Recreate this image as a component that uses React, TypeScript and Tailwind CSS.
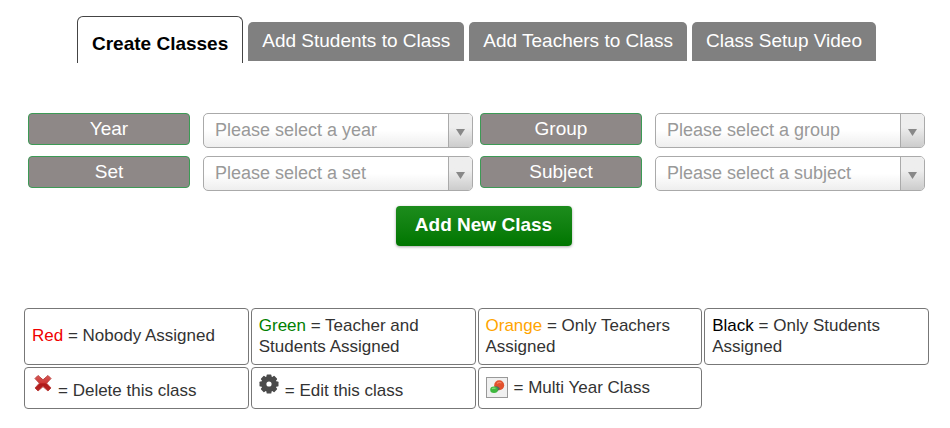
import type { ReactNode } from "react";

const tabs = ["Create Classes", "Add Students to Class", "Add Teachers to Class", "Class Setup Video"];

const fields = [
  { id: "year", label: "Year", placeholder: "Please select a year" },
  { id: "group", label: "Group", placeholder: "Please select a group" },
  { id: "set", label: "Set", placeholder: "Please select a set" },
  { id: "subject", label: "Subject", placeholder: "Please select a subject" },
];

function Tab({ label, active }: { label: string; active: boolean }) {
  if (active) {
    return (
      <button
        type="button"
        role="tab"
        aria-selected="true"
        className="h-[47px] shrink-0 rounded-t-md border border-b-0 border-[#444] bg-white px-3.5 pt-2 font-bold text-black"
      >
        {label}
      </button>
    );
  }
  return (
    <button
      type="button"
      role="tab"
      aria-selected="false"
      className="mb-0.5 h-[39px] shrink-0 rounded-t-[5px] bg-[#808080] px-3.5 text-white"
    >
      {label}
    </button>
  );
}

function SelectField({ id, label, placeholder }: { id: string; label: string; placeholder: string }) {
  return (
    <div className="flex items-start gap-[13px]">
      <label
        htmlFor={id}
        className="h-8 w-[162px] shrink-0 rounded border border-[#3c9a55] bg-[#8e8887] text-center text-[19px] leading-[30px] text-white"
      >
        {label}
      </label>
      <div className="relative min-w-0 flex-1">
        <select
          id={id}
          defaultValue=""
          className="h-[35px] w-full appearance-none rounded-[5px] border border-[#aaa] bg-linear-to-b from-white from-50% to-[#eee] pr-7 pl-[11px] text-[18px] text-[#999]"
        >
          <option value="">{placeholder}</option>
        </select>
        <span className="pointer-events-none absolute inset-y-px right-px flex w-6 items-center justify-center rounded-r border-l border-[#aaa] bg-linear-to-b from-[#eee] from-40% to-[#ccc]">
          <svg width="9" height="7" viewBox="0 0 9 7" className="mt-1" aria-hidden="true">
            <path d="M0 0h9L4.5 7z" fill="#888" />
          </svg>
        </span>
      </div>
    </div>
  );
}

function LegendCell({ children }: { children: ReactNode }) {
  return <li className="flex items-center rounded border border-[#777] px-[7px] pb-0.5">{children}</li>;
}

function DeleteIcon() {
  return (
    <svg width="18" height="18" viewBox="0 0 18 18" aria-hidden="true">
      <defs>
        <linearGradient id="cross" x1="0" y1="0" x2="0" y2="1">
          <stop offset="0" stopColor="#d65a57" />
          <stop offset="0.45" stopColor="#cf3836" />
          <stop offset="0.55" stopColor="#b01818" />
          <stop offset="1" stopColor="#b52828" />
        </linearGradient>
      </defs>
      <path
        d="M4 1.5 9 5.8 14 1.5 17 4.5 12.6 9.2 17 14 14 17 9 12.6 4 17 1 14 5.4 9.2 1 4.5z"
        fill="url(#cross)"
        stroke="#bd4442"
        strokeWidth="1"
        strokeLinejoin="round"
      />
    </svg>
  );
}

function GearIcon() {
  return (
    <svg width="20" height="20" viewBox="0 0 20 20" fill="#4a4a4a" aria-hidden="true">
      <path
        fillRule="evenodd"
        d="M10 2.2a7.8 7.8 0 1 0 0 15.6 7.8 7.8 0 0 0 0-15.6zm0 5.2a2.6 2.6 0 1 1 0 5.2 2.6 2.6 0 0 1 0-5.2z"
      />
      {[0, 45, 90, 135, 180, 225, 270, 315].map((angle) => (
        <path key={angle} d="M7.3 4 7.6 1.100Q7.700 .5 8.300 .5h3.400q.6 0 .7.600L12.700 4z" transform={`rotate(${angle} 10 10)`} />
      ))}
    </svg>
  );
}

function MultiYearIcon() {
  return (
    <svg width="22" height="21" viewBox="0 0 22 21" aria-hidden="true">
      <rect x="0.5" y="0.5" width="21" height="20" fill="#f0f0f0" stroke="#999" />
      <circle cx="13.2" cy="8.3" r="5" fill="#e2512d" />
      <path d="M11 6.5q2-2 4.5-.5" fill="none" stroke="#ef8060" strokeWidth="1.2" />
      <path d="M8.5 9.8q3-1.5 5.5 1.7l-2.5 3z" fill="#556b62" />
      <ellipse cx="8" cy="12.8" rx="3.8" ry="3.2" fill="#3fb83f" />
      <path d="M6 11.8q1.5-1.3 3.5-.4" fill="none" stroke="#86dc78" strokeWidth="1.2" />
    </svg>
  );
}

export default function App() {
  return (
    <main className="bg-white pt-4 pr-[21px] pb-5 pl-6 font-['Liberation_Sans',Arial,sans-serif] text-[17px] text-[#333]">
      <div role="tablist" className="flex items-end justify-center gap-[5px] text-[19px]">
        {tabs.map((label, i) => (
          <Tab key={label} label={label} active={i === 0} />
        ))}
      </div>

      <form className="mt-[50px] px-1" onSubmit={(e) => e.preventDefault()}>
        <div className="grid grid-cols-2 gap-x-[7px] gap-y-2">
          {fields.map((field) => (
            <SelectField key={field.id} {...field} />
          ))}
        </div>
        <div className="mt-[15px] flex justify-center pl-3.5">
          <button
            type="submit"
            className="h-10 w-44 rounded bg-linear-to-b from-[#1c8c1c] to-[#007600] pb-0.5 text-[19px] font-bold text-white shadow-[0_1px_3px_rgba(0,0,0,0.35)]"
          >
            Add New Class
          </button>
        </div>
      </form>

      <ul className="mt-[62px] grid grid-cols-4 grid-rows-[57px_42px] gap-0.5 leading-[21px]">
        <LegendCell>
          <p><span className="text-[#f00000]">Red</span> = Nobody Assigned</p>
        </LegendCell>
        <LegendCell>
          <p><span className="text-[#008000]">Green</span> = Teacher and<br />Students Assigned</p>
        </LegendCell>
        <LegendCell>
          <p><span className="text-[#ffa500]">Orange</span> = Only Teachers<br />Assigned</p>
        </LegendCell>
        <LegendCell>
          <p><span className="text-black">Black</span> = Only Students<br />Assigned</p>
        </LegendCell>
        <LegendCell>
          <span className="flex items-start gap-1.5 pl-0.5">
            <DeleteIcon />
            <span className="pt-1.5">= Delete this class</span>
          </span>
        </LegendCell>
        <LegendCell>
          <span className="flex items-start gap-1.5">
            <GearIcon />
            <span className="pt-1.5">= Edit this class</span>
          </span>
        </LegendCell>
        <LegendCell>
          <span className="flex items-center gap-1.5">
            <MultiYearIcon />
            <span>= Multi Year Class</span>
          </span>
        </LegendCell>
      </ul>
    </main>
  );
}
